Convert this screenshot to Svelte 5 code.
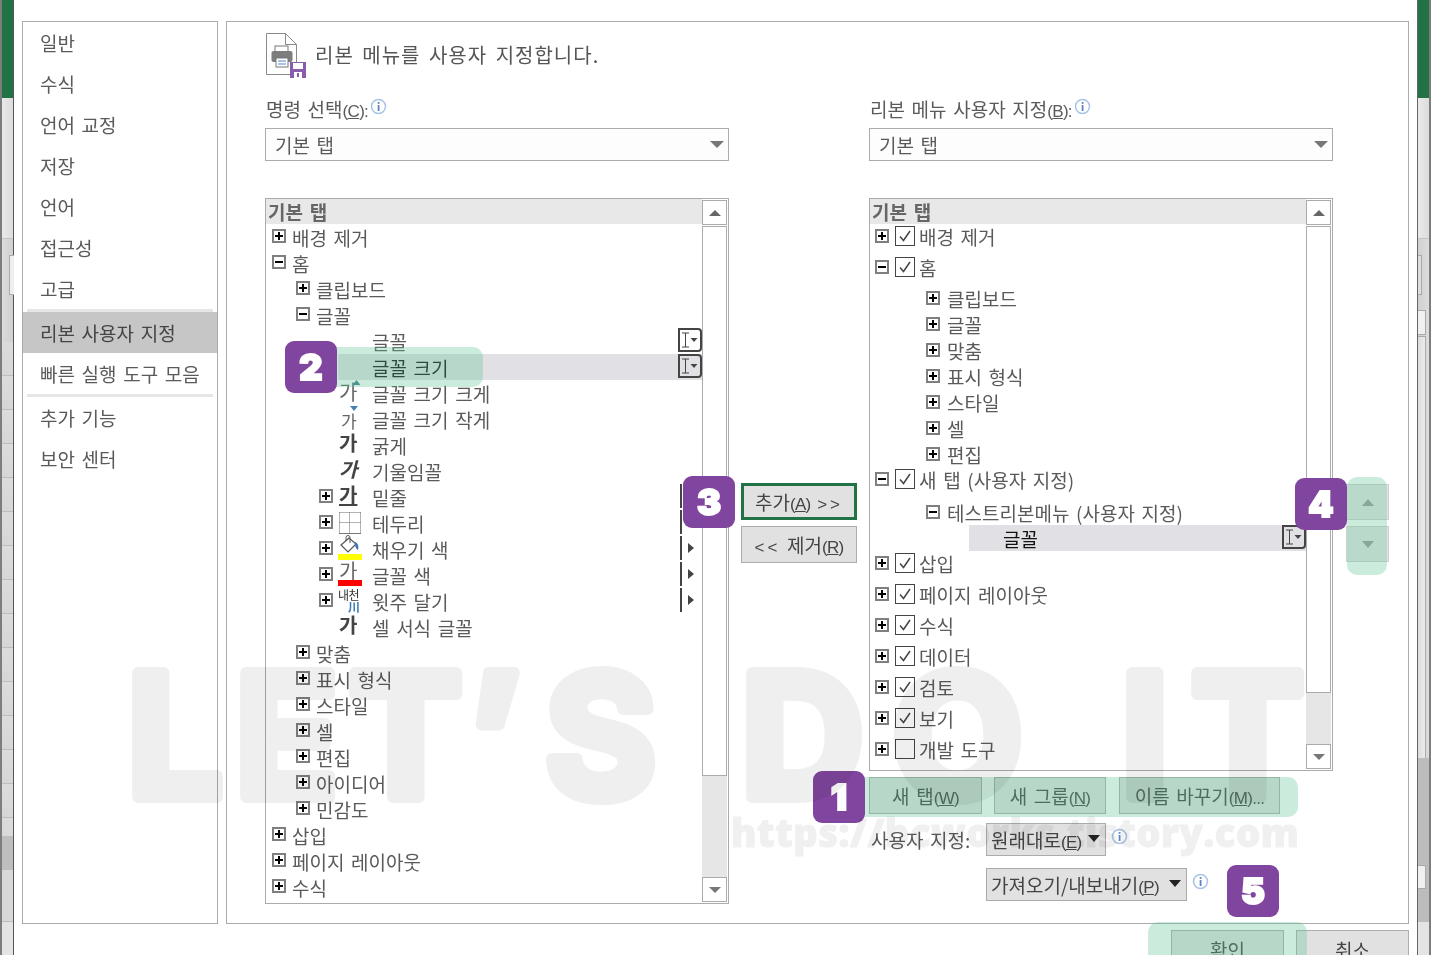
<script>
  const menu1 = ['일반', '수식', '언어 교정', '저장', '언어', '접근성', '고급'];
  const left = [
    { t: '배경 제거', l: 0, e: '+' },
    { t: '홈', l: 0, e: '-' },
    { t: '클립보드', l: 1, e: '+' },
    { t: '글꼴', l: 1, e: '-' },
    { t: '글꼴', l: 2, r: 'combo' },
    { t: '글꼴 크기', l: 2, r: 'combo', sel: true },
    { t: '글꼴 크기 크게', l: 2, i: 'up' },
    { t: '글꼴 크기 작게', l: 2, i: 'down' },
    { t: '굵게', l: 2, i: 'b' },
    { t: '기울임꼴', l: 2, i: 'it' },
    { t: '밑줄', l: 2, e: '+', i: 'u', r: 'bar' },
    { t: '테두리', l: 2, e: '+', i: 'border', r: 'bar' },
    { t: '채우기 색', l: 2, e: '+', i: 'fill', r: 'tri' },
    { t: '글꼴 색', l: 2, e: '+', i: 'color', r: 'tri' },
    { t: '윗주 달기', l: 2, e: '+', i: 'ruby', r: 'tri' },
    { t: '셀 서식 글꼴', l: 2, i: 'b' },
    { t: '맞춤', l: 1, e: '+' },
    { t: '표시 형식', l: 1, e: '+' },
    { t: '스타일', l: 1, e: '+' },
    { t: '셀', l: 1, e: '+' },
    { t: '편집', l: 1, e: '+' },
    { t: '아이디어', l: 1, e: '+' },
    { t: '민감도', l: 1, e: '+' },
    { t: '삽입', l: 0, e: '+' },
    { t: '페이지 레이아웃', l: 0, e: '+' },
    { t: '수식', l: 0, e: '+' }
  ];
  const right = [
    { t: '배경 제거', k: 'top', e: '+', c: 1, h: 24 },
    { t: '홈', k: 'top', e: '-', c: 1, h: 37 },
    { t: '클립보드', k: 'sub', e: '+', h: 26 },
    { t: '글꼴', k: 'sub', e: '+', h: 26 },
    { t: '맞춤', k: 'sub', e: '+', h: 26 },
    { t: '표시 형식', k: 'sub', e: '+', h: 26 },
    { t: '스타일', k: 'sub', e: '+', h: 26 },
    { t: '셀', k: 'sub', e: '+', h: 26 },
    { t: '편집', k: 'sub', e: '+', h: 26 },
    { t: '새 탭 (사용자 지정)', k: 'top', e: '-', c: 1, h: 24 },
    { t: '테스트리본메뉴 (사용자 지정)', k: 'sub', e: '-', h: 26, gap: true },
    { t: '글꼴', k: 'leaf', h: 26 },
    { t: '삽입', k: 'top', e: '+', c: 1, h: 24 },
    { t: '페이지 레이아웃', k: 'top', e: '+', c: 1, h: 31, gap2: true },
    { t: '수식', k: 'top', e: '+', c: 1, h: 31 },
    { t: '데이터', k: 'top', e: '+', c: 1, h: 31 },
    { t: '검토', k: 'top', e: '+', c: 1, h: 31 },
    { t: '보기', k: 'top', e: '+', c: 1, h: 31 },
    { t: '개발 도구', k: 'top', e: '+', c: 0, h: 31 },
    { t: '추가 기능', k: 'top', e: '+', c: 1, h: 31 }
  ];
</script>

{#snippet info()}
  <svg class="info" width="17" height="17" viewBox="0 0 17 17"><circle cx="8.5" cy="8.5" r="7" fill="#fff" stroke="#a8c3e6" stroke-width="1.5"/><rect x="7.7" y="7" width="1.8" height="6" fill="#5b86c4"/><rect x="7.7" y="4" width="1.8" height="1.8" fill="#5b86c4"/></svg>
{/snippet}

{#snippet combo()}
  <span class="combo">
    <svg width="20" height="20" viewBox="0 0 20 20"><path d="M2 3h7M2 17h7M5.5 3v14" stroke="#444" stroke-width="1" fill="none"/><path d="M10.5 8h7l-3.5 4z" fill="#444"/></svg>
  </span>
{/snippet}

{#snippet scroll(kind)}
  <div class="scroll {kind}">
    <div class="sbtn"><svg width="14" height="8" viewBox="0 0 14 8"><path d="M7 1l6 6H1z" fill="#666"/></svg></div>
    <div class="thumb"></div>
    <div class="track"></div>
    <div class="sbtn down"><svg width="14" height="8" viewBox="0 0 14 8"><path d="M7 7L1 1h12z" fill="#777"/></svg></div>
  </div>
{/snippet}

{#snippet ricon(i)}
  <span class="slot">
    {#if i === 'up'}
      <span class="ga thin">가</span>
      <svg class="mark upmark" width="9" height="5" viewBox="0 0 9 5"><path d="M4.5 0l4 5h-8z" fill="#3f7f96"/></svg>
    {:else if i === 'down'}
      <span class="ga thin small">가</span>
      <svg class="mark downmark" width="8" height="5" viewBox="0 0 8 5"><path d="M4 5L0 0h8z" fill="#4a7fb5"/></svg>
    {:else if i === 'b'}
      <span class="ga bold">가</span>
    {:else if i === 'it'}
      <span class="ga bold ital">가</span>
    {:else if i === 'u'}
      <span class="ga bold under">가</span>
    {:else if i === 'border'}
      <svg class="mark bordermark" width="22" height="22" viewBox="0 0 22 22"><path d="M.5.5h21M.5 10.5h21M.5.5v20.5M10.5.5v20.5M21.5.5v20.5" fill="none" stroke="#666" stroke-dasharray="1 1"/><path d="M0 21.5h22" stroke="#777"/></svg>
    {:else if i === 'fill'}
      <svg class="mark fillmark" width="22" height="20" viewBox="0 0 22 20"><path d="M11 3L3 10l7 7 8-8z" fill="#fff" stroke="#555" stroke-width="1.2"/><path d="M8 6V2.5a2 2 0 0 1 4 0V8" fill="none" stroke="#555"/><path d="M17 7c3 1 4 4 3 8-2-1-3-3-3-8z" fill="#3f78b5"/></svg>
      <span class="cbar yellow"></span>
    {:else if i === 'color'}
      <span class="ga thin high">가</span>
      <span class="cbar red"></span>
    {:else if i === 'ruby'}
      <span class="rubytop">내천</span>
      <span class="rubybot">川</span>
    {/if}
  </span>
{/snippet}

<div class="page">
  <div class="strip lstrip">
    <div class="green"></div>
    <div class="pale"></div>
    <div class="plain"><span class="tab"></span></div>
    <div class="lines"></div>
    <div class="deep"></div>
    <div class="lines short"></div>
    <div class="pale end"></div>
  </div>

  <div class="dialog">
    <div class="body">
      <nav class="side">
        {#each menu1 as m}<div class="item">{m}</div>{/each}
        <div class="sep"></div>
        <div class="item on">리본 사용자 지정</div>
        <div class="item">빠른 실행 도구 모음</div>
        <div class="sep"></div>
        <div class="item">추가 기능</div>
        <div class="item">보안 센터</div>
      </nav>

      <main class="panel">
        <header class="head">
          <svg class="doc" width="42" height="46" viewBox="0 0 42 46">
            <path d="M.5.5h19l11 11v30H.5z" fill="#fff" stroke="#8a8a8a"/>
            <path d="M19.5.5v11h11" fill="none" stroke="#8a8a8a"/>
            <rect x="9" y="13" width="13" height="9" fill="#fff" stroke="#777"/>
            <rect x="5.5" y="18" width="21" height="11" rx="2" fill="#7d7d7d"/>
            <rect x="10" y="25" width="12" height="9" fill="#fff" stroke="#777"/>
            <path d="M12 28h8M12 31h8" stroke="#4a86c5"/>
            <rect x="24" y="29" width="16" height="16" fill="#8a5cad"/>
            <rect x="27" y="30" width="10" height="6" fill="#fff"/>
            <rect x="28" y="39" width="8" height="6" fill="#fff"/>
            <rect x="31" y="40" width="2" height="4" fill="#8a5cad"/>
          </svg>
          <h1>리본 메뉴를 사용자 지정합니다.</h1>
        </header>

        <div class="cols">
          <section class="col">
            <div class="label">명령 선택<span class="en">(<u>C</u>):</span>{@render info()}</div>
            <div class="select"><span>기본 탭</span><i class="sarrow"></i></div>
            <div class="list tall">
              <div class="content">
                <div class="thead">기본 탭</div>
                {#each left as r}
                  <div class="row l{r.l}" class:sel={r.sel}>
                    {#if r.e}
                      <span class="exp" class:minus={r.e === '-'}></span>
                    {:else if r.l === 2}
                      <span class="exp blank"></span>
                    {/if}
                    {#if r.l === 2}{@render ricon(r.i)}{/if}
                    <span class="txt">{r.t}</span>
                    {#if r.r === 'combo'}{@render combo()}{/if}
                    {#if r.r === 'bar' || r.r === 'tri'}
                      <span class="rmark"><i class="vbar"></i><i class="rtri"></i></span>
                    {/if}
                  </div>
                {/each}
              </div>
              {@render scroll('sl')}
            </div>
          </section>

          <section class="mid">
            <button class="btn add">추가<span class="en">(<u>A</u>)</span> <span class="ang">&gt;&gt;</span></button>
            <button class="btn rem"><span class="ang">&lt;&lt;</span> 제거<span class="en">(<u>R</u>)</span></button>
          </section>

          <section class="col">
            <div class="label rl">리본 메뉴 사용자 지정<span class="en">(<u>B</u>):</span>{@render info()}</div>
            <div class="select"><span>기본 탭</span><i class="sarrow"></i></div>
            <div class="list short">
              <div class="content">
                <div class="thead">기본 탭</div>
                {#each right as r}
                  <div class="rrow {r.k}" class:gap={r.gap} class:gap2={r.gap2} style="height:{r.h}px">
                    {#if r.e}<span class="exp" class:minus={r.e === '-'}></span>{/if}
                    {#if r.k === 'top'}
                      <span class="check">
                        {#if r.c}<svg width="18" height="18" viewBox="0 0 18 18"><path d="M4 9.5l3.5 4L14 4" fill="none" stroke="#444" stroke-width="1.5"/></svg>{/if}
                      </span>
                    {/if}
                    <span class="txt">{r.t}</span>
                    {#if r.k === 'leaf'}{@render combo()}{/if}
                  </div>
                {/each}
              </div>
              {@render scroll('sr')}
            </div>
            <div class="btnrow">
              <button class="btn w113">새 탭<span class="en">(<u>W</u>)</span></button>
              <button class="btn w112">새 그룹<span class="en">(<u>N</u>)</span></button>
              <button class="btn w161">이름 바꾸기<span class="en">(<u>M</u>)...</span></button>
            </div>
            <div class="custom">
              <span class="clabel">사용자 지정:</span>
              <div class="drop d1"><span>원래대로<span class="en">(<u>E</u>)</span></span><i class="darrow"></i></div>
              {@render info()}
            </div>
            <div class="custom imp">
              <div class="drop d2"><span>가져오기/내보내기<span class="en">(<u>P</u>)</span></span><i class="darrow"></i></div>
              {@render info()}
            </div>
          </section>

          <section class="updown">
            <div class="ud"><svg width="12" height="7" viewBox="0 0 12 7"><path d="M6 0l6 7H0z" fill="#9a9a9a"/></svg></div>
            <div class="ud"><svg width="12" height="7" viewBox="0 0 12 7"><path d="M6 7L0 0h12z" fill="#9a9a9a"/></svg></div>
          </section>
        </div>
      </main>
    </div>
    <footer class="foot">
      <button class="btn ok">확인</button>
      <button class="btn ok">취소</button>
    </footer>
  </div>

  <div class="strip rstrip">
    <div class="green"></div>
    <div class="pale"></div>
    <div class="rplain"><span class="rtab t1"></span><span class="rtab t2"></span><span class="rtab t3"></span></div>
    <div class="rdeep"><span class="rtab t4"></span></div>
    <div class="pale end"></div>
  </div>

  <div class="hl h1"></div>
  <div class="hl h2"></div>
  <div class="hl h3"></div>
  <div class="hl h4"></div>

  <div class="badge b1">1</div>
  <div class="badge b2">2</div>
  <div class="badge b3">3</div>
  <div class="badge b4">4</div>
  <div class="badge b5">5</div>

  <svg class="wm" width="1431" height="955" viewBox="0 0 1431 955">
    <text y="797" x="127 235 349 468 545">LET’S</text>
    <text y="797" x="741 892">DO</text>
    <text y="797" x="1121 1191">IT</text>
  </svg>
  <div class="wm2">https://bcworks.tistory.com</div>
</div>

<style>
  :global(body) { margin: 0; background: #fff; }
  * { box-sizing: border-box; }
  .page {
    position: relative; width: 1431px; height: 955px; overflow: hidden; display: flex; background: #fff;
    font-family: "Noto Sans CJK KR", "Noto Sans", sans-serif; font-size: 19px; color: #5a5a5a; word-spacing: 2.4px;
  }
  .strip { flex: none; width: 14px; display: flex; flex-direction: column; height: 955px; }
  .lstrip { border-left: 2px solid #7d7d7d; border-right: 1px solid #555; }
  .rstrip { border-left: 1px solid #666; border-right: 2px solid #7d7d7d; }
  .green { height: 98px; background: #217346; flex: none; }
  .pale { height: 140px; flex: none; background: linear-gradient(90deg, #e9e9e9, #dcdcdc); }
  .plain { height: 104px; flex: none; background: linear-gradient(90deg, #dcdcdc, #d0d0d0); position: relative; border-top: 1px solid #c4c4c4; }
  .tab { position: absolute; left: 7px; top: 16px; width: 5px; height: 40px; background: #eee; border: 1px solid #aaa; border-right: 0; }
  .lines { height: 494px; flex: none; background: repeating-linear-gradient(180deg, #dcdcdc 0, #d6d6d6 33px, #bdbdbd 33px, #bdbdbd 34px); }
  .deep { height: 34px; flex: none; background: #bebebe; }
  .lines.short { height: 52px; background: repeating-linear-gradient(180deg, #d8d8d8 0, #d8d8d8 51px, #bdbdbd 51px, #bdbdbd 52px); }
  .pale.end { flex: 1; height: auto; background: #e4e4e4; }

  .rplain { height: 520px; flex: none; position: relative; background: linear-gradient(90deg, #d0d0d0, #dcdcdc); border-top: 1px solid #c4c4c4; }
  .rdeep { height: 164px; flex: none; position: relative; background: #bcbcbc; }
  .rtab { position: absolute; left: 0; background: #e8e8e8; border: 1px solid #aaa; border-left: 0; }
  .t1 { top: 16px; width: 4px; height: 40px; background: #ddd; }
  .t2 { top: 71px; width: 8px; height: 25px; background: #f0f0f0; }
  .t3 { top: 97px; width: 8px; height: 423px; background: linear-gradient(90deg, #dcdcdc, #ececec); }
  .t4 { top: 107px; width: 8px; height: 24px; background: #f0f0f0; }

  .dialog { flex: 1; min-width: 0; padding: 21px 0 0 8px; display: flex; flex-direction: column; height: 955px; overflow: hidden; background: #fff; }
  .body { display: flex; gap: 8px; height: 903px; flex: none; }
  .side { width: 196px; flex: none; border: 1px solid #ababab; background: #fff; }
  .item { height: 41px; padding-left: 17px; line-height: 41px; white-space: nowrap; }
  .item.on { background: #c6c6c6; color: #444; }
  .sep { height: 3px; margin: 0 4px; background: #e6e6e6; }

  .panel { width: 1183px; flex: none; border: 1px solid #ababab; padding-left: 38px; background: #fff; }
  .head { display: flex; align-items: flex-start; height: 76px; padding: 11px 0 0 1px; }
  .doc { flex: none; margin-right: 7px; }
  .head h1 { margin: 8px 0 0; font-size: 20px; font-weight: 400; line-height: 28px; letter-spacing: 1px; word-spacing: 3px; color: #555; white-space: nowrap; }

  .cols { display: grid; grid-template-columns: 464px 116px 464px 42px; column-gap: 12px; align-items: start; }
  .col { display: flex; flex-direction: column; width: 464px; }
  .label { height: 24px; line-height: 22px; padding-left: 1px; white-space: nowrap; position: relative; }
  .en { font-family: "Liberation Sans", sans-serif; font-size: 17px; letter-spacing: -0.7px; word-spacing: 0; }
  .info { display: inline-block; vertical-align: 2px; margin-left: 2px; }
  .select { margin-top: 6px; height: 33px; flex: none; border: 1px solid #ababab; background: #fdfdfd; display: flex; align-items: center; justify-content: space-between; padding: 0 4px 0 9px; line-height: 31px; }
  .sarrow { width: 0; height: 0; border-left: 7px solid transparent; border-right: 7px solid transparent; border-top: 7px solid #777; }

  .list { margin-top: 37px; border: 1px solid #ababab; display: flex; overflow: hidden; background: #fff; flex: none; }
  .list.tall { height: 706px; }
  .list.short { height: 573px; }
  .content { width: 436px; flex: none; overflow: hidden; }
  .thead { height: 25px; line-height: 26px; background: #e8e8e8; font-weight: 700; color: #666; padding-left: 2px; }

  .row { position: relative; height: 26px; display: flex; align-items: center; white-space: nowrap; }
  .row.l0 { padding-left: 6px; }
  .row.l1 { padding-left: 30px; }
  .row.l2 { padding-left: 53px; }
  .row > * { position: relative; }
  .row .exp { margin-top: -2px; }
  .sel::before { content: ""; position: absolute; inset: 0 0 0 72px; background: #e1e0e5; }
  .sel .txt { color: #111; }
  .txt { line-height: 26px; margin-left: 6px; padding-top: 2px; }
  .l2 .txt { margin-left: 0; }

  .exp { flex: none; position: relative; width: 14px; height: 14px; border: 2px solid #7f7f7f; background: #fff; }
  .exp::before { content: ""; position: absolute; left: 1px; right: 1px; top: 4px; height: 2px; background: #000; }
  .exp::after { content: ""; position: absolute; top: 1px; bottom: 1px; left: 4px; width: 2px; background: #000; }
  .exp.minus::after { display: none; }
  .exp.blank { visibility: hidden; }

  .slot { flex: none; width: 31px; height: 26px; margin-right: 8px; position: relative; display: block; }
  .ga { position: absolute; left: 6px; top: -1px; font-size: 20px; line-height: 26px; color: #444; word-spacing: 0; }
  .ga.thin { color: #666; }
  .ga.small { font-size: 17px; left: 8px; top: 2px; }
  .ga.bold { font-weight: 700; color: #444; top: -2px; }
  .ga.ital { font-style: italic; }
  .ga.under { text-decoration: underline; text-underline-offset: 1px; text-decoration-thickness: 1.5px; }
  .ga.high { top: -4px; }
  .mark { position: absolute; }
  .upmark { left: 19px; top: 0; }
  .downmark { left: 17px; top: 0; }
  .bordermark { left: 6px; top: 2px; }
  .fillmark { left: 5px; top: -1px; }
  .cbar { position: absolute; left: 5px; bottom: 2px; width: 24px; height: 6px; }
  .yellow { background: #ff0; }
  .red { background: #f00; }
  .rubytop { position: absolute; left: 5px; top: 0; font-size: 12px; line-height: 14px; color: #333; white-space: nowrap; word-spacing: 0; letter-spacing: -0.5px; }
  .rubybot { position: absolute; left: 15px; top: 12px; font-size: 12px; line-height: 14px; color: #3f78b5; font-weight: 700; }

  .combo { margin-left: auto; margin-top: -2px; flex: none; width: 24px; height: 24px; border: 2px solid #444; border-radius: 0 4px 4px 0; background: #fff; display: flex; }
  .sel .combo { background: #e1e0e5; }
  .leaf .combo { background: #e1e0e5; }
  .rmark { margin-left: auto; margin-top: -2px; width: 22px; height: 24px; display: flex; align-items: center; flex: none; }
  .vbar { width: 2px; height: 24px; background: #444; flex: none; }
  .rtri { width: 0; height: 0; margin-left: 6px; border-left: 6px solid #444; border-top: 5px solid transparent; border-bottom: 5px solid transparent; }

  .scroll { width: 25px; flex: none; display: flex; flex-direction: column; margin: 1px 1px 1px 0; height: calc(100% - 2px); }
  .sbtn { height: 25px; flex: none; border: 1px solid #ababab; background: #fff; display: flex; align-items: center; justify-content: center; }
  .thumb { flex: none; border: 1px solid #ababab; background: #fff; margin-top: 1px; }
  .sl .thumb { height: 550px; }
  .sr .thumb { height: 467px; }
  .track { flex: 1; background: #e6e6e6; }

  .mid { padding-top: 385px; display: flex; flex-direction: column; gap: 6px; }
  .btn { font: inherit; color: #444; word-spacing: inherit; background: #e1e1e1; border: 1px solid #adadad; padding: 0; white-space: nowrap; }
  .add { height: 37px; width: 116px; border: 3px solid #217346; }
  .rem { height: 37px; width: 116px; }
  .ang { letter-spacing: 3px; font-family: "Liberation Sans", sans-serif; font-size: 17px; }

  .updown { margin-left: 1px; padding-top: 386px; display: flex; flex-direction: column; gap: 6px; }
  .ud { width: 43px; height: 36px; background: #e4e4e4; border: 1px solid #cfcfcf; display: flex; align-items: center; justify-content: center; }

  .rrow { display: flex; align-items: center; white-space: nowrap; }
  .rrow.top { padding-left: 5px; }
  .rrow.sub { padding-left: 56px; }
  .rrow.gap { margin-top: 8px; }
  .rrow.gap2 { margin-top: 3px; }
  .rrow.leaf { margin-left: 99px; padding-left: 34px; background: #e1e0e5; }
  .rrow.leaf .txt { margin-left: 0; color: #111; }
  .rrow.top .txt { margin-left: 4px; }
  .rrow.sub .txt { margin-left: 7px; }
  .check { flex: none; width: 20px; height: 20px; border: 1px solid #444; margin-left: 6px; background: #fff; display: flex; align-items: center; justify-content: center; }

  .btnrow { margin-top: 6px; height: 37px; display: flex; flex: none; }
  .w113 { width: 113px; margin-right: 12px; }
  .w112 { width: 112px; margin-right: 13px; }
  .w161 { width: 161px; }
  .custom { margin-top: 9px; height: 33px; display: flex; align-items: flex-start; flex: none; }
  .custom.imp { margin-top: 12px; padding-left: 117px; }
  .clabel { width: 117px; padding-left: 2px; line-height: 33px; flex: none; }
  .drop { height: 33px; border: 1px solid #ababab; background: #e1e1e1; display: flex; align-items: center; justify-content: space-between; padding: 0 5px 0 4px; color: #444; white-space: nowrap; }
  .d1 { width: 120px; }
  .d2 { width: 201px; }
  .darrow { width: 0; height: 0; border-left: 6px solid transparent; border-right: 6px solid transparent; border-top: 7px solid #222; margin-bottom: 3px; }
  .custom .info { margin: 5px 0 0 5px; }

  .foot { height: 40px; margin-top: 6px; display: flex; justify-content: flex-end; gap: 12px; padding-right: 8px; flex: none; }
  .ok { width: 113px; height: 40px; line-height: 34px; padding-top: 0; display: block; }

  .hl { position: absolute; background: rgba(96, 196, 148, 0.33); }
  .h1 { left: 865px; top: 777px; width: 433px; height: 40px; border-radius: 0 10px 10px 0; }
  .h2 { left: 337px; top: 347px; width: 146px; height: 40px; border-radius: 0 10px 10px 0; }
  .h3 { left: 1347px; top: 477px; width: 40px; height: 98px; border-radius: 10px; }
  .h4 { left: 1148px; top: 922px; width: 159px; height: 50px; border-radius: 10px; }

  .badge { position: absolute; width: 52px; height: 52px; border-radius: 9px; background: #80459e; color: #fff; font-family: Inter, sans-serif; font-weight: 900; font-size: 36px; line-height: 52px; text-align: center; -webkit-text-stroke: 2px #fff; }
  .b1 { left: 813px; top: 771px; }
  .b2 { left: 285px; top: 341px; }
  .b3 { left: 683px; top: 476px; }
  .b4 { left: 1295px; top: 478px; }
  .b5 { left: 1227px; top: 865px; }

  .wm { position: absolute; left: 0; top: 0; pointer-events: none; mix-blend-mode: multiply; }
  .wm text { font-family: Inter, sans-serif; font-weight: 700; font-size: 170px; fill: #efefef; stroke: #efefef; stroke-width: 12px; stroke-linejoin: round; word-spacing: 0; }
  .wm2 { position: absolute; left: 731px; top: 806px; font-family: "Open Sans", sans-serif; font-weight: 800; font-size: 38px; line-height: 52px; letter-spacing: 0.6px; color: #f0f0f0; mix-blend-mode: multiply; white-space: nowrap; pointer-events: none; word-spacing: 0; -webkit-text-stroke: 1px #f0f0f0; }
</style>
